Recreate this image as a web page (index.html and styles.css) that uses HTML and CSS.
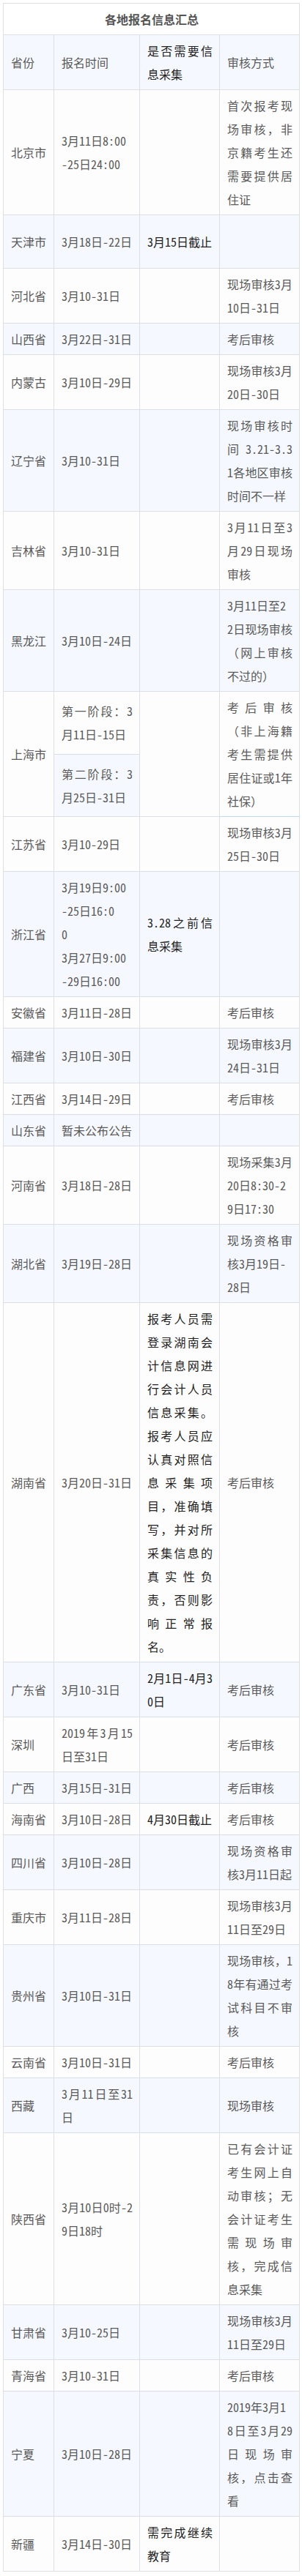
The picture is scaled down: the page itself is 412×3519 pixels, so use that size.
FILE: index.html
```html
<!DOCTYPE html>
<html lang="zh-CN">
<head>
<meta charset="utf-8">
<title>各地报名信息汇总</title>
<link rel="stylesheet" href="styles.css">
</head>
<body>
<table class="sheet">
<colgroup>
<col class="c-prov"><col class="c-date"><col class="c-info"><col class="c-check">
</colgroup>
<tbody>
<tr><th class="title" colspan="4">各地报名信息汇总</th></tr>
<tr><td>省份</td><td>报名时间</td><td class="info">是否需要信息采集</td><td>审核方式</td></tr>
<tr><td>北京市</td><td>3月11日8:00<br>-25日24:00</td><td class="info"></td><td>首次报考现场审核，非京籍考生还需要提供居住证</td></tr>
<tr class="row-tj"><td>天津市</td><td>3月18日-22日</td><td class="info">3月15日截止</td><td></td></tr>
<tr><td>河北省</td><td>3月10-31日</td><td class="info"></td><td>现场审核3月10日-31日</td></tr>
<tr><td>山西省</td><td>3月22日-31日</td><td class="info"></td><td>考后审核</td></tr>
<tr><td>内蒙古</td><td>3月10日-29日</td><td class="info"></td><td>现场审核3月20日-30日</td></tr>
<tr><td>辽宁省</td><td>3月10-31日</td><td class="info"></td><td>现场审核时间 3.21-3.31各地区审核时间不一样</td></tr>
<tr><td>吉林省</td><td>3月10-31日</td><td class="info"></td><td>3月11日至3月29日现场审核</td></tr>
<tr><td>黑龙江</td><td>3月10日-24日</td><td class="info"></td><td>3月11日至2<br>2日现场审核（网上审核不过的）</td></tr>
<tr><td rowspan="2">上海市</td><td>第一阶段：3月11日-15日</td><td class="info" rowspan="2"></td><td class="sh-check" rowspan="2">考后审核（非上海籍考生需提供居住证或1年社保）</td></tr>
<tr><td>第二阶段：3月25日-31日</td></tr>
<tr><td>江苏省</td><td>3月10-29日</td><td class="info"></td><td>现场审核3月25日-30日</td></tr>
<tr><td>浙江省</td><td>3月19日9:00<br>-25日16:0<br>0<br>3月27日9:00<br>-29日16:00</td><td class="info">3.28之前信息采集</td><td></td></tr>
<tr><td>安徽省</td><td>3月11日-28日</td><td class="info"></td><td>考后审核</td></tr>
<tr><td>福建省</td><td>3月10日-30日</td><td class="info"></td><td>现场审核3月24日-31日</td></tr>
<tr><td>江西省</td><td>3月14日-29日</td><td class="info"></td><td>考后审核</td></tr>
<tr><td>山东省</td><td>暂未公布公告</td><td class="info"></td><td></td></tr>
<tr><td>河南省</td><td>3月18日-28日</td><td class="info"></td><td>现场采集3月20日8:30-2<br>9日17:30</td></tr>
<tr><td>湖北省</td><td>3月19日-28日</td><td class="info"></td><td>现场资格审核3月19日-<br>28日</td></tr>
<tr><td>湖南省</td><td>3月20日-31日</td><td class="info">报考人员需登录湖南会计信息网进行会计人员信息采集。报考人员应认真对照信息采集项目，准确填写，并对所采集信息的真实性负责，否则影响正常报名。</td><td>考后审核</td></tr>
<tr><td>广东省</td><td>3月10-31日</td><td class="info">2月1日-4月30日</td><td>考后审核</td></tr>
<tr><td>深圳</td><td>2019年3月15日至31日</td><td class="info"></td><td>考后审核</td></tr>
<tr><td>广西</td><td>3月15日-31日</td><td class="info"></td><td>考后审核</td></tr>
<tr><td>海南省</td><td>3月10日-28日</td><td class="info">4月30日截止</td><td>考后审核</td></tr>
<tr><td>四川省</td><td>3月10日-28日</td><td class="info"></td><td>现场资格审核3月11日起</td></tr>
<tr><td>重庆市</td><td>3月11日-28日</td><td class="info"></td><td>现场审核3月11日至29日</td></tr>
<tr><td>贵州省</td><td>3月10日-31日</td><td class="info"></td><td>现场审核，18年有通过考试科目不审核</td></tr>
<tr><td>云南省</td><td>3月10日-31日</td><td class="info"></td><td>考后审核</td></tr>
<tr><td>西藏</td><td>3月11日至31日</td><td class="info"></td><td>现场审核</td></tr>
<tr><td>陕西省</td><td>3月10日0时-29日18时</td><td class="info"></td><td>已有会计证考生网上自动审核；无会计证考生需现场审核，完成信息采集</td></tr>
<tr><td>甘肃省</td><td>3月10-25日</td><td class="info"></td><td>现场审核3月11日至29日</td></tr>
<tr><td>青海省</td><td>3月10-31日</td><td class="info"></td><td>考后审核</td></tr>
<tr><td>宁夏</td><td>3月10日-28日</td><td class="info"></td><td>2019年3月1<br>8日至3月29日现场审核，点击查看</td></tr>
<tr><td>新疆</td><td>3月14日-30日</td><td class="info">需完成继续教育</td><td></td></tr>
</tbody>
</table>
</body>
</html>
```

FILE: styles.css
```css
html, body {
  margin: 0;
  padding: 0;
  background: #ffffff;
}

body {
  font-family: "Noto Sans Mono CJK SC", "Noto Sans CJK SC", sans-serif;
}

.sheet {
  border-collapse: collapse;
  table-layout: fixed;
  width: 404px;
  margin: 4px 4px 6px 4px;
}

.c-prov { width: 69px; }
.c-date { width: 117px; }
.c-info { width: 109px; }
.c-check { width: 109px; }

.sheet td,
.sheet th {
  border: 1px solid #dcdfe4;
  padding: 5px 9px 5px 10px;
  font-size: 16px;
  line-height: 32px;
  color: #5a5a5a;
  font-weight: normal;
  text-align: justify;
  word-break: break-all;
  vertical-align: middle;
}

.sheet tr:nth-child(odd) { background: #fdfdfd; }
.sheet tr:nth-child(even) { background: #f5f9ff; }

.sheet .title {
  background: #ffffff;
  text-align: center;
  font-weight: bold;
  color: #555555;
}

.sheet .info { color: #222222; }

.sheet .sh-check { border-bottom-color: #b8dbf4; }

.row-tj { height: 73px; }
```
